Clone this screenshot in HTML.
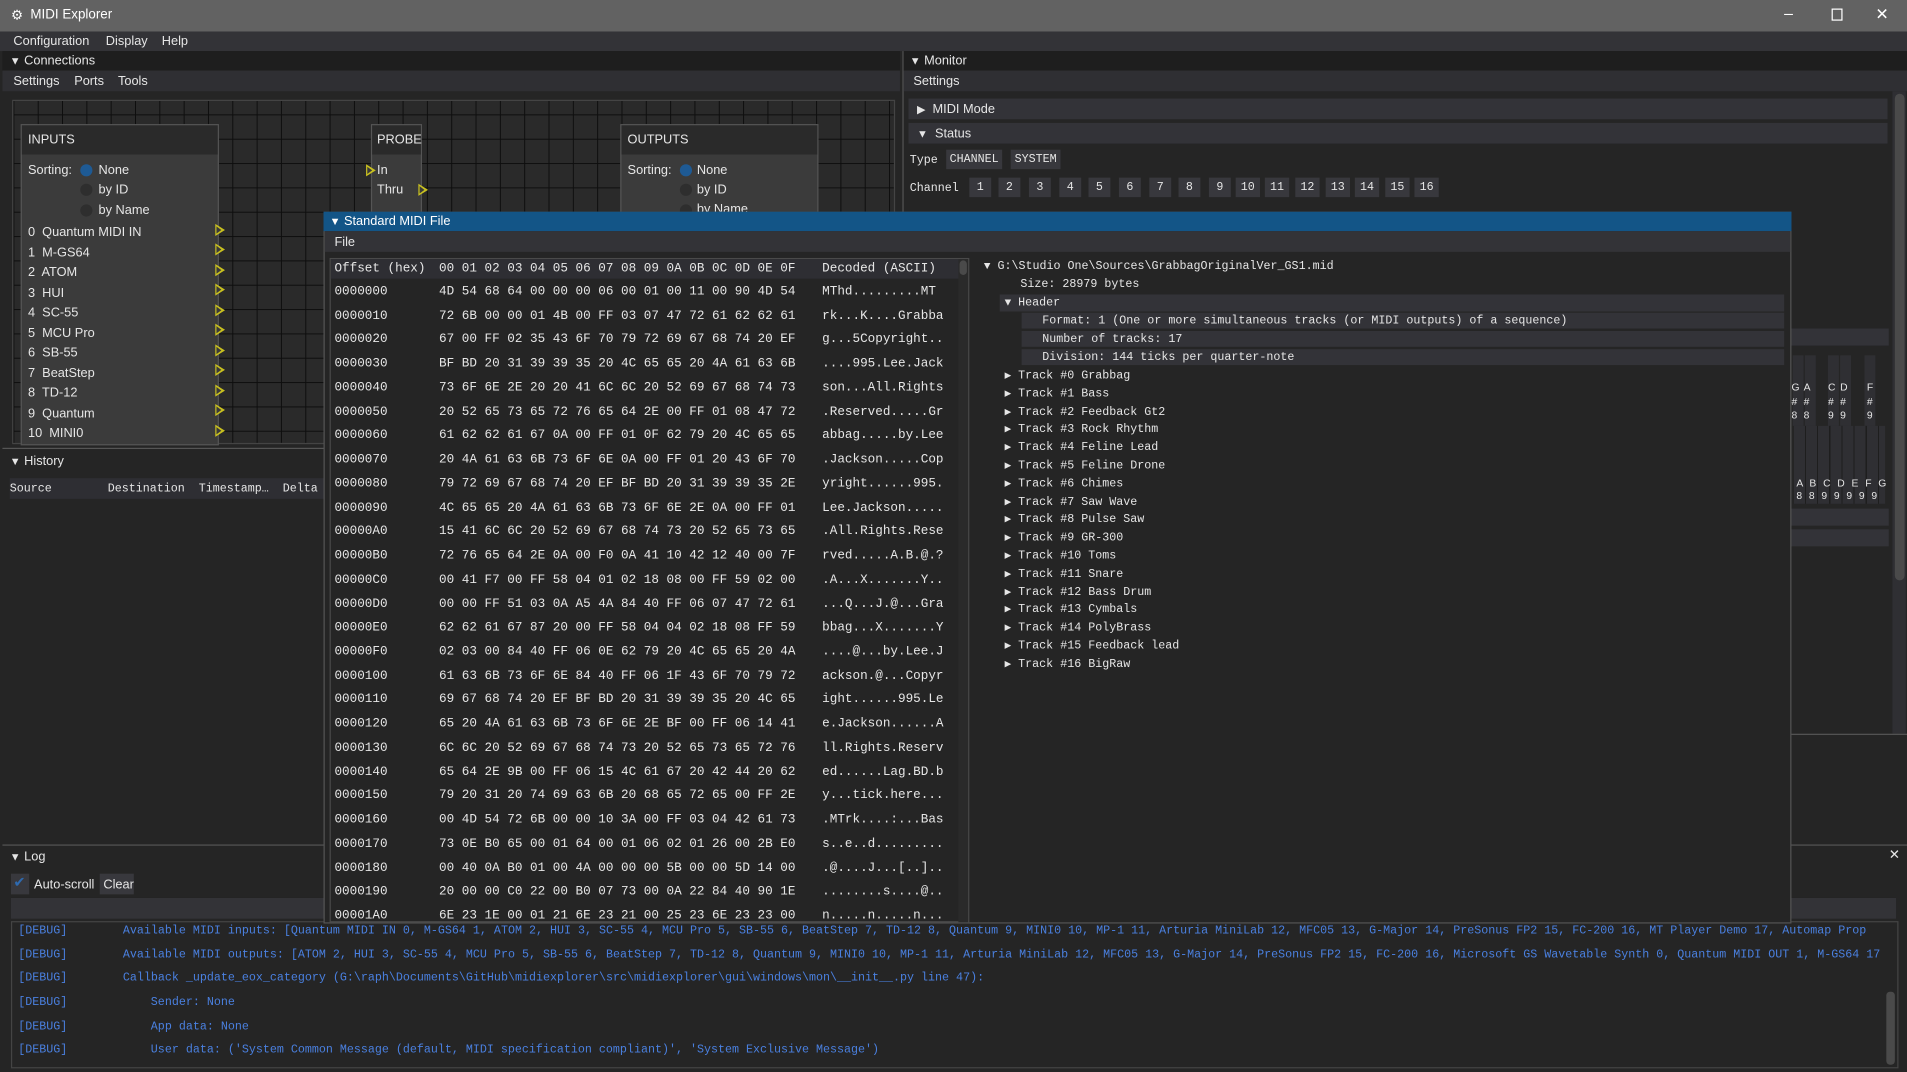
<!DOCTYPE html>
<html><head><meta charset="utf-8"><style>
*{margin:0;padding:0;box-sizing:border-box}
html,body{width:1907px;height:1072px;overflow:hidden;background:#252525}
#w{position:absolute;left:0;top:0;width:1568px;height:881px;transform:scale(1.2162,1.2168);transform-origin:0 0;background:#252525;font-family:"Liberation Sans",sans-serif;font-size:10.5px;color:#e6e6e6}
.a{position:absolute;white-space:pre}
.m{font-family:"Liberation Mono",monospace;font-size:9.6px}
.tri{font-size:9px}
.box{position:absolute}
.hx{position:absolute;font-family:"Liberation Mono",monospace;font-size:10.4px;white-space:pre;line-height:14px;color:#e6e6e6}
.y{position:absolute;width:0;height:0;border-top:5px solid transparent;border-bottom:5px solid transparent;border-left:8px solid #c8c020}
.y::after{content:"";position:absolute;left:-7px;top:-3px;border-top:3px solid transparent;border-bottom:3px solid transparent;border-left:4px solid #3a3a3a}
.btn{position:absolute;background:#38383d;height:16px;text-align:center;line-height:16px;font-family:"Liberation Mono",monospace;font-size:9.6px}
.dbg{position:absolute;font-family:"Liberation Mono",monospace;font-size:9.6px;color:#4a80e0;white-space:pre}
</style></head><body><div id="w">
<!-- title bar -->
<div class="box" style="left:0;top:0;width:1568px;height:26px;background:#626262"></div>
<div class="a" style="left:9px;top:6px;font-size:11px;color:#fff">⚙</div>
<div class="a" style="left:25px;top:6px;font-size:11px;color:#fff">MIDI Explorer</div>
<div class="a" style="left:1467px;top:3px;font-size:13px;color:#fff">–</div>
<div class="box" style="left:1506px;top:7px;width:9px;height:10px;border:1px solid #fff"></div>
<div class="a" style="left:1542px;top:4px;font-size:13px;color:#fff">✕</div>
<!-- menu -->
<div class="box" style="left:0;top:26px;width:1568px;height:16px;background:#333337"></div>
<div class="a" style="left:11px;top:28px">Configuration</div>
<div class="a" style="left:87px;top:28px">Display</div>
<div class="a" style="left:133px;top:28px">Help</div>
<!-- connections -->
<div class="box" style="left:2px;top:42px;width:738px;height:16px;background:#1e1e1e"></div>
<div class="a" style="left:8px;top:44px"><span class="tri">▼</span> Connections</div>
<div class="box" style="left:2px;top:58px;width:738px;height:17px;background:#2f2f33"></div>
<div class="a" style="left:11px;top:61px">Settings</div>
<div class="a" style="left:61px;top:61px">Ports</div>
<div class="a" style="left:97px;top:61px">Tools</div>
<div class="box" style="left:10px;top:82px;width:726px;height:283px;background-color:#2a2a2a;background-image:linear-gradient(#0e0e0e 1px,transparent 1px),linear-gradient(90deg,#0e0e0e 1px,transparent 1px);background-size:20px 20px;background-position:0 11px;border:1px solid #444"></div>
<!-- inputs node -->
<div class="box" style="left:17px;top:102px;width:163px;height:264px;background:#3b3b3b;border:1px solid #555"></div>
<div class="box" style="left:18px;top:103px;width:161px;height:24px;background:#2a2a2a"></div>
<div class="a" style="left:23px;top:109px">INPUTS</div>
<div class="a" style="left:23px;top:134px">Sorting:</div>
<div class="box" style="left:66px;top:135px;width:10px;height:10px;border-radius:50%;background:#1e5a94"></div>
<div class="a" style="left:81px;top:134px">None</div>
<div class="box" style="left:66px;top:151px;width:10px;height:10px;border-radius:50%;background:#2e2e2e"></div>
<div class="a" style="left:81px;top:150px">by ID</div>
<div class="box" style="left:66px;top:168px;width:10px;height:10px;border-radius:50%;background:#2e2e2e"></div>
<div class="a" style="left:81px;top:167px">by Name</div>
<div class="a" style="left:23px;top:183px;line-height:16.5px">0  Quantum MIDI IN
1  M-GS64
2  ATOM
3  HUI
4  SC-55
5  MCU Pro
6  SB-55
7  BeatStep
8  TD-12
9  Quantum
10  MINI0</div>
<div class="y" style="left:177px;top:184px"></div><div class="y" style="left:177px;top:200px"></div><div class="y" style="left:177px;top:217px"></div><div class="y" style="left:177px;top:233px"></div><div class="y" style="left:177px;top:250px"></div><div class="y" style="left:177px;top:266px"></div><div class="y" style="left:177px;top:283px"></div><div class="y" style="left:177px;top:299px"></div><div class="y" style="left:177px;top:316px"></div><div class="y" style="left:177px;top:332px"></div><div class="y" style="left:177px;top:349px"></div>
<!-- probe -->
<div class="box" style="left:305px;top:102px;width:42px;height:76px;background:#3b3b3b;border:1px solid #555"></div>
<div class="box" style="left:306px;top:103px;width:40px;height:24px;background:#2a2a2a"></div>
<div class="a" style="left:310px;top:109px">PROBE</div>
<div class="a" style="left:310px;top:134px">In</div>
<div class="a" style="left:310px;top:150px">Thru</div>
<div class="y" style="left:301px;top:135px"></div><div class="y" style="left:344px;top:151px"></div>
<!-- outputs -->
<div class="box" style="left:510px;top:102px;width:163px;height:80px;background:#3b3b3b;border:1px solid #555"></div>
<div class="box" style="left:511px;top:103px;width:161px;height:24px;background:#2a2a2a"></div>
<div class="a" style="left:516px;top:109px">OUTPUTS</div>
<div class="a" style="left:516px;top:134px">Sorting:</div>
<div class="box" style="left:559px;top:135px;width:10px;height:10px;border-radius:50%;background:#1e5a94"></div>
<div class="a" style="left:573px;top:134px">None</div>
<div class="box" style="left:559px;top:151px;width:10px;height:10px;border-radius:50%;background:#2e2e2e"></div>
<div class="a" style="left:573px;top:150px">by ID</div>
<div class="box" style="left:559px;top:168px;width:10px;height:10px;border-radius:50%;background:#2e2e2e"></div>
<div class="a" style="left:573px;top:166px">by Name</div>
<!-- history -->
<div class="box" style="left:2px;top:368px;width:264px;height:1px;background:#555"></div>
<div class="a" style="left:8px;top:373px"><span class="tri">▼</span> History</div>
<div class="box" style="left:8px;top:393px;width:258px;height:17px;background:#2e2e33"></div>
<div class="a m" style="left:8px;top:396px">Source        Destination  Timestamp…  Delta (</div>
<div class="box" style="left:2px;top:694px;width:1566px;height:1px;background:#555"></div>
<!-- log -->
<div class="a" style="left:8px;top:698px"><span class="tri">▼</span> Log</div>
<div class="box" style="left:9px;top:718px;width:15px;height:17px;background:#38383d"></div>
<div class="a" style="left:11px;top:718px;color:#2e6ab0;font-size:12px">✔</div>
<div class="a" style="left:28px;top:721px">Auto-scroll</div>
<div class="box" style="left:82px;top:718px;width:28px;height:17px;background:#38383d"></div>
<div class="a" style="left:85px;top:721px">Clear</div>
<div class="box" style="left:9px;top:738px;width:1550px;height:17px;background:#333337"></div>
<div class="box" style="left:9px;top:757px;width:1552px;height:121px;border:1px solid #444"></div>
<div class="a" style="left:1553px;top:696px;font-size:11px">✕</div>
<div class="dbg" style="left:15px;top:759px">[DEBUG]</div><div class="dbg" style="left:101px;top:759px">Available MIDI inputs: [Quantum MIDI IN 0, M-GS64 1, ATOM 2, HUI 3, SC-55 4, MCU Pro 5, SB-55 6, BeatStep 7, TD-12 8, Quantum 9, MINI0 10, MP-1 11, Arturia MiniLab 12, MFC05 13, G-Major 14, PreSonus FP2 15, FC-200 16, MT Player Demo 17, Automap Prop</div>
<div class="dbg" style="left:15px;top:779px">[DEBUG]</div><div class="dbg" style="left:101px;top:779px">Available MIDI outputs: [ATOM 2, HUI 3, SC-55 4, MCU Pro 5, SB-55 6, BeatStep 7, TD-12 8, Quantum 9, MINI0 10, MP-1 11, Arturia MiniLab 12, MFC05 13, G-Major 14, PreSonus FP2 15, FC-200 16, Microsoft GS Wavetable Synth 0, Quantum MIDI OUT 1, M-GS64 17</div>
<div class="dbg" style="left:15px;top:798px">[DEBUG]</div><div class="dbg" style="left:101px;top:798px">Callback _update_eox_category (G:\raph\Documents\GitHub\midiexplorer\src\midiexplorer\gui\windows\mon\__init__.py line 47):</div>
<div class="dbg" style="left:15px;top:818px">[DEBUG]</div><div class="dbg" style="left:124px;top:818px">Sender: None</div>
<div class="dbg" style="left:15px;top:838px">[DEBUG]</div><div class="dbg" style="left:124px;top:838px">App data: None</div>
<div class="dbg" style="left:15px;top:857px">[DEBUG]</div><div class="dbg" style="left:124px;top:857px">User data: ('System Common Message (default, MIDI specification compliant)', 'System Exclusive Message')</div>
<div class="box" style="left:1551px;top:815px;width:7px;height:60px;background:#4a4a4a;border-radius:3px"></div>
<!-- monitor -->
<div class="box" style="left:742px;top:42px;width:1px;height:652px;background:#555"></div>
<div class="box" style="left:743px;top:42px;width:825px;height:16px;background:#1e1e1e"></div>
<div class="a" style="left:748px;top:44px"><span class="tri">▼</span> Monitor</div>
<div class="box" style="left:743px;top:58px;width:825px;height:17px;background:#2f2f33"></div>
<div class="a" style="left:751px;top:61px">Settings</div>
<div class="box" style="left:747px;top:81px;width:805px;height:17px;background:#333338"></div>
<div class="a" style="left:754px;top:84px"><span class="tri">▶</span>  MIDI Mode</div>
<div class="box" style="left:747px;top:101px;width:805px;height:17px;background:#333338"></div>
<div class="a" style="left:754px;top:104px"><span class="tri">▼</span>  Status</div>
<div class="a m" style="left:748px;top:126px">Type</div>
<div class="btn" style="left:778px;top:123px;width:46px">CHANNEL</div>
<div class="btn" style="left:831px;top:123px;width:41px">SYSTEM</div>
<div class="a m" style="left:748px;top:149px">Channel</div>
<div class="btn" style="left:797px;top:146px;width:18px">1</div><div class="btn" style="left:821px;top:146px;width:18px">2</div><div class="btn" style="left:846px;top:146px;width:18px">3</div><div class="btn" style="left:871px;top:146px;width:18px">4</div><div class="btn" style="left:895px;top:146px;width:18px">5</div><div class="btn" style="left:920px;top:146px;width:18px">6</div><div class="btn" style="left:945px;top:146px;width:18px">7</div><div class="btn" style="left:969px;top:146px;width:18px">8</div><div class="btn" style="left:994px;top:146px;width:18px">9</div><div class="btn" style="left:1016px;top:146px;width:20px">10</div><div class="btn" style="left:1040px;top:146px;width:20px">11</div><div class="btn" style="left:1065px;top:146px;width:20px">12</div><div class="btn" style="left:1090px;top:146px;width:20px">13</div><div class="btn" style="left:1114px;top:146px;width:20px">14</div><div class="btn" style="left:1139px;top:146px;width:20px">15</div><div class="btn" style="left:1163px;top:146px;width:20px">16</div>
<div class="box" style="left:1473px;top:270px;width:80px;height:14px;background:#333338"></div>
<div class="box" style="left:1474px;top:292px;width:9px;height:58px;background:#2f2f33"></div><div class="box" style="left:1484px;top:292px;width:9px;height:58px;background:#2f2f33"></div><div class="box" style="left:1503px;top:292px;width:9px;height:58px;background:#2f2f33"></div><div class="box" style="left:1513px;top:292px;width:9px;height:58px;background:#2f2f33"></div><div class="box" style="left:1533px;top:292px;width:9px;height:58px;background:#2f2f33"></div>
<div class="a" style="left:1473px;top:313px;font-size:8.5px;line-height:11.5px">G
#
8</div><div class="a" style="left:1483px;top:313px;font-size:8.5px;line-height:11.5px">A
#
8</div><div class="a" style="left:1503px;top:313px;font-size:8.5px;line-height:11.5px">C
#
9</div><div class="a" style="left:1513px;top:313px;font-size:8.5px;line-height:11.5px">D
#
9</div><div class="a" style="left:1535px;top:313px;font-size:8.5px;line-height:11.5px">F
#
9</div>
<div class="box" style="left:1475px;top:350px;width:75px;height:64px;background:repeating-linear-gradient(90deg,#2f2f33 0 9px,#1e1e1e 9px 10px)"></div>
<div class="a" style="left:1477px;top:392px;font-size:8.5px;line-height:10px;letter-spacing:1.6px">A B C D E F G
8 8 9 9 9 9 9</div>
<div class="box" style="left:1473px;top:418px;width:80px;height:14px;background:#333338"></div>
<div class="box" style="left:1473px;top:435px;width:80px;height:14px;background:#333338"></div>
<div class="box" style="left:1556px;top:75px;width:11px;height:528px;background:#2f2f33"></div>
<div class="box" style="left:1558px;top:77px;width:8px;height:400px;background:#4a4a4a;border-radius:4px"></div>
<div class="box" style="left:1473px;top:603px;width:95px;height:1px;background:#555"></div>
<!-- SMF window -->
<div class="box" style="left:266px;top:174px;width:1207px;height:585px;background:#252525;border:1px solid #555"></div>
<div class="box" style="left:266px;top:174px;width:1207px;height:16px;background:#135587"></div>
<div class="a" style="left:271px;top:176px;color:#fff"><span class="tri">▼</span> Standard MIDI File</div>
<div class="box" style="left:267px;top:190px;width:1205px;height:17px;background:#333337"></div>
<div class="a" style="left:275px;top:193px">File</div>
<div class="box" style="left:271px;top:212px;width:526px;height:546px;border:1px solid #4a4a4a"></div>
<div class="box" style="left:272px;top:213px;width:517px;height:16px;background:#2e2e33"></div>
<div class="box" style="left:788px;top:213px;width:8px;height:545px;background:#2a2a2a"></div>
<div class="box" style="left:789px;top:214px;width:6px;height:12px;background:#4a4a4a;border-radius:3px"></div>
<div class="hx" style="left:275px;top:214px">Offset (hex)</div>
<div class="hx" style="left:361px;top:214px">00 01 02 03 04 05 06 07 08 09 0A 0B 0C 0D 0E 0F</div>
<div class="hx" style="left:676px;top:214px">Decoded (ASCII)</div>
<div class="hx" style="left:275px;top:231px;line-height:19.73px">0000000
0000010
0000020
0000030
0000040
0000050
0000060
0000070
0000080
0000090
00000A0
00000B0
00000C0
00000D0
00000E0
00000F0
0000100
0000110
0000120
0000130
0000140
0000150
0000160
0000170
0000180
0000190
00001A0</div>
<div class="hx" style="left:361px;top:231px;line-height:19.73px">4D 54 68 64 00 00 00 06 00 01 00 11 00 90 4D 54
72 6B 00 00 01 4B 00 FF 03 07 47 72 61 62 62 61
67 00 FF 02 35 43 6F 70 79 72 69 67 68 74 20 EF
BF BD 20 31 39 39 35 20 4C 65 65 20 4A 61 63 6B
73 6F 6E 2E 20 20 41 6C 6C 20 52 69 67 68 74 73
20 52 65 73 65 72 76 65 64 2E 00 FF 01 08 47 72
61 62 62 61 67 0A 00 FF 01 0F 62 79 20 4C 65 65
20 4A 61 63 6B 73 6F 6E 0A 00 FF 01 20 43 6F 70
79 72 69 67 68 74 20 EF BF BD 20 31 39 39 35 2E
4C 65 65 20 4A 61 63 6B 73 6F 6E 2E 0A 00 FF 01
15 41 6C 6C 20 52 69 67 68 74 73 20 52 65 73 65
72 76 65 64 2E 0A 00 F0 0A 41 10 42 12 40 00 7F
00 41 F7 00 FF 58 04 01 02 18 08 00 FF 59 02 00
00 00 FF 51 03 0A A5 4A 84 40 FF 06 07 47 72 61
62 62 61 67 87 20 00 FF 58 04 04 02 18 08 FF 59
02 03 00 84 40 FF 06 0E 62 79 20 4C 65 65 20 4A
61 63 6B 73 6F 6E 84 40 FF 06 1F 43 6F 70 79 72
69 67 68 74 20 EF BF BD 20 31 39 39 35 20 4C 65
65 20 4A 61 63 6B 73 6F 6E 2E BF 00 FF 06 14 41
6C 6C 20 52 69 67 68 74 73 20 52 65 73 65 72 76
65 64 2E 9B 00 FF 06 15 4C 61 67 20 42 44 20 62
79 20 31 20 74 69 63 6B 20 68 65 72 65 00 FF 2E
00 4D 54 72 6B 00 00 10 3A 00 FF 03 04 42 61 73
73 0E B0 65 00 01 64 00 01 06 02 01 26 00 2B E0
00 40 0A B0 01 00 4A 00 00 00 5B 00 00 5D 14 00
20 00 00 C0 22 00 B0 07 73 00 0A 22 84 40 90 1E
6E 23 1E 00 01 21 6E 23 21 00 25 23 6E 23 23 00</div>
<div class="hx" style="left:676px;top:231px;line-height:19.73px">MThd.........MT
rk...K....Grabba
g...5Copyright..
....995.Lee.Jack
son...All.Rights
.Reserved.....Gr
abbag.....by.Lee
.Jackson.....Cop
yright......995.
Lee.Jackson.....
.All.Rights.Rese
rved.....A.B.@.?
.A...X.......Y..
...Q...J.@...Gra
bbag...X.......Y
....@...by.Lee.J
ackson.@...Copyr
ight......995.Le
e.Jackson......A
ll.Rights.Reserv
ed......Lag.BD.b
y...tick.here...
.MTrk....:...Bas
s..e..d.........
.@....J...[..]..
........s....@..
n.....n.....n...</div>
<!-- tree -->
<div class="a m" style="left:809px;top:213px"><span class="tri">▼</span> G:\Studio One\Sources\GrabbagOriginalVer_GS1.mid</div>
<div class="a m" style="left:839px;top:228px">Size: 28979 bytes</div>
<div class="box" style="left:822px;top:242px;width:645px;height:14px;background:#333338"></div>
<div class="a m" style="left:826px;top:243px"><span class="tri">▼</span> Header</div>
<div class="box" style="left:840px;top:257px;width:627px;height:13px;background:#333338"></div>
<div class="box" style="left:840px;top:272px;width:627px;height:13px;background:#333338"></div>
<div class="box" style="left:840px;top:287px;width:627px;height:13px;background:#333338"></div>
<div class="a m" style="left:857px;top:258px">Format: 1 (One or more simultaneous tracks (or MIDI outputs) of a sequence)</div>
<div class="a m" style="left:857px;top:273px">Number of tracks: 17</div>
<div class="a m" style="left:857px;top:288px">Division: 144 ticks per quarter-note</div>
<div class="a m" style="left:826px;top:302px;line-height:14.8px"><span class="tri">▶</span> Track #0 Grabbag
<span class="tri">▶</span> Track #1 Bass
<span class="tri">▶</span> Track #2 Feedback Gt2
<span class="tri">▶</span> Track #3 Rock Rhythm
<span class="tri">▶</span> Track #4 Feline Lead
<span class="tri">▶</span> Track #5 Feline Drone
<span class="tri">▶</span> Track #6 Chimes
<span class="tri">▶</span> Track #7 Saw Wave
<span class="tri">▶</span> Track #8 Pulse Saw
<span class="tri">▶</span> Track #9 GR-300
<span class="tri">▶</span> Track #10 Toms
<span class="tri">▶</span> Track #11 Snare
<span class="tri">▶</span> Track #12 Bass Drum
<span class="tri">▶</span> Track #13 Cymbals
<span class="tri">▶</span> Track #14 PolyBrass
<span class="tri">▶</span> Track #15 Feedback lead
<span class="tri">▶</span> Track #16 BigRaw</div>
</div></body></html>
